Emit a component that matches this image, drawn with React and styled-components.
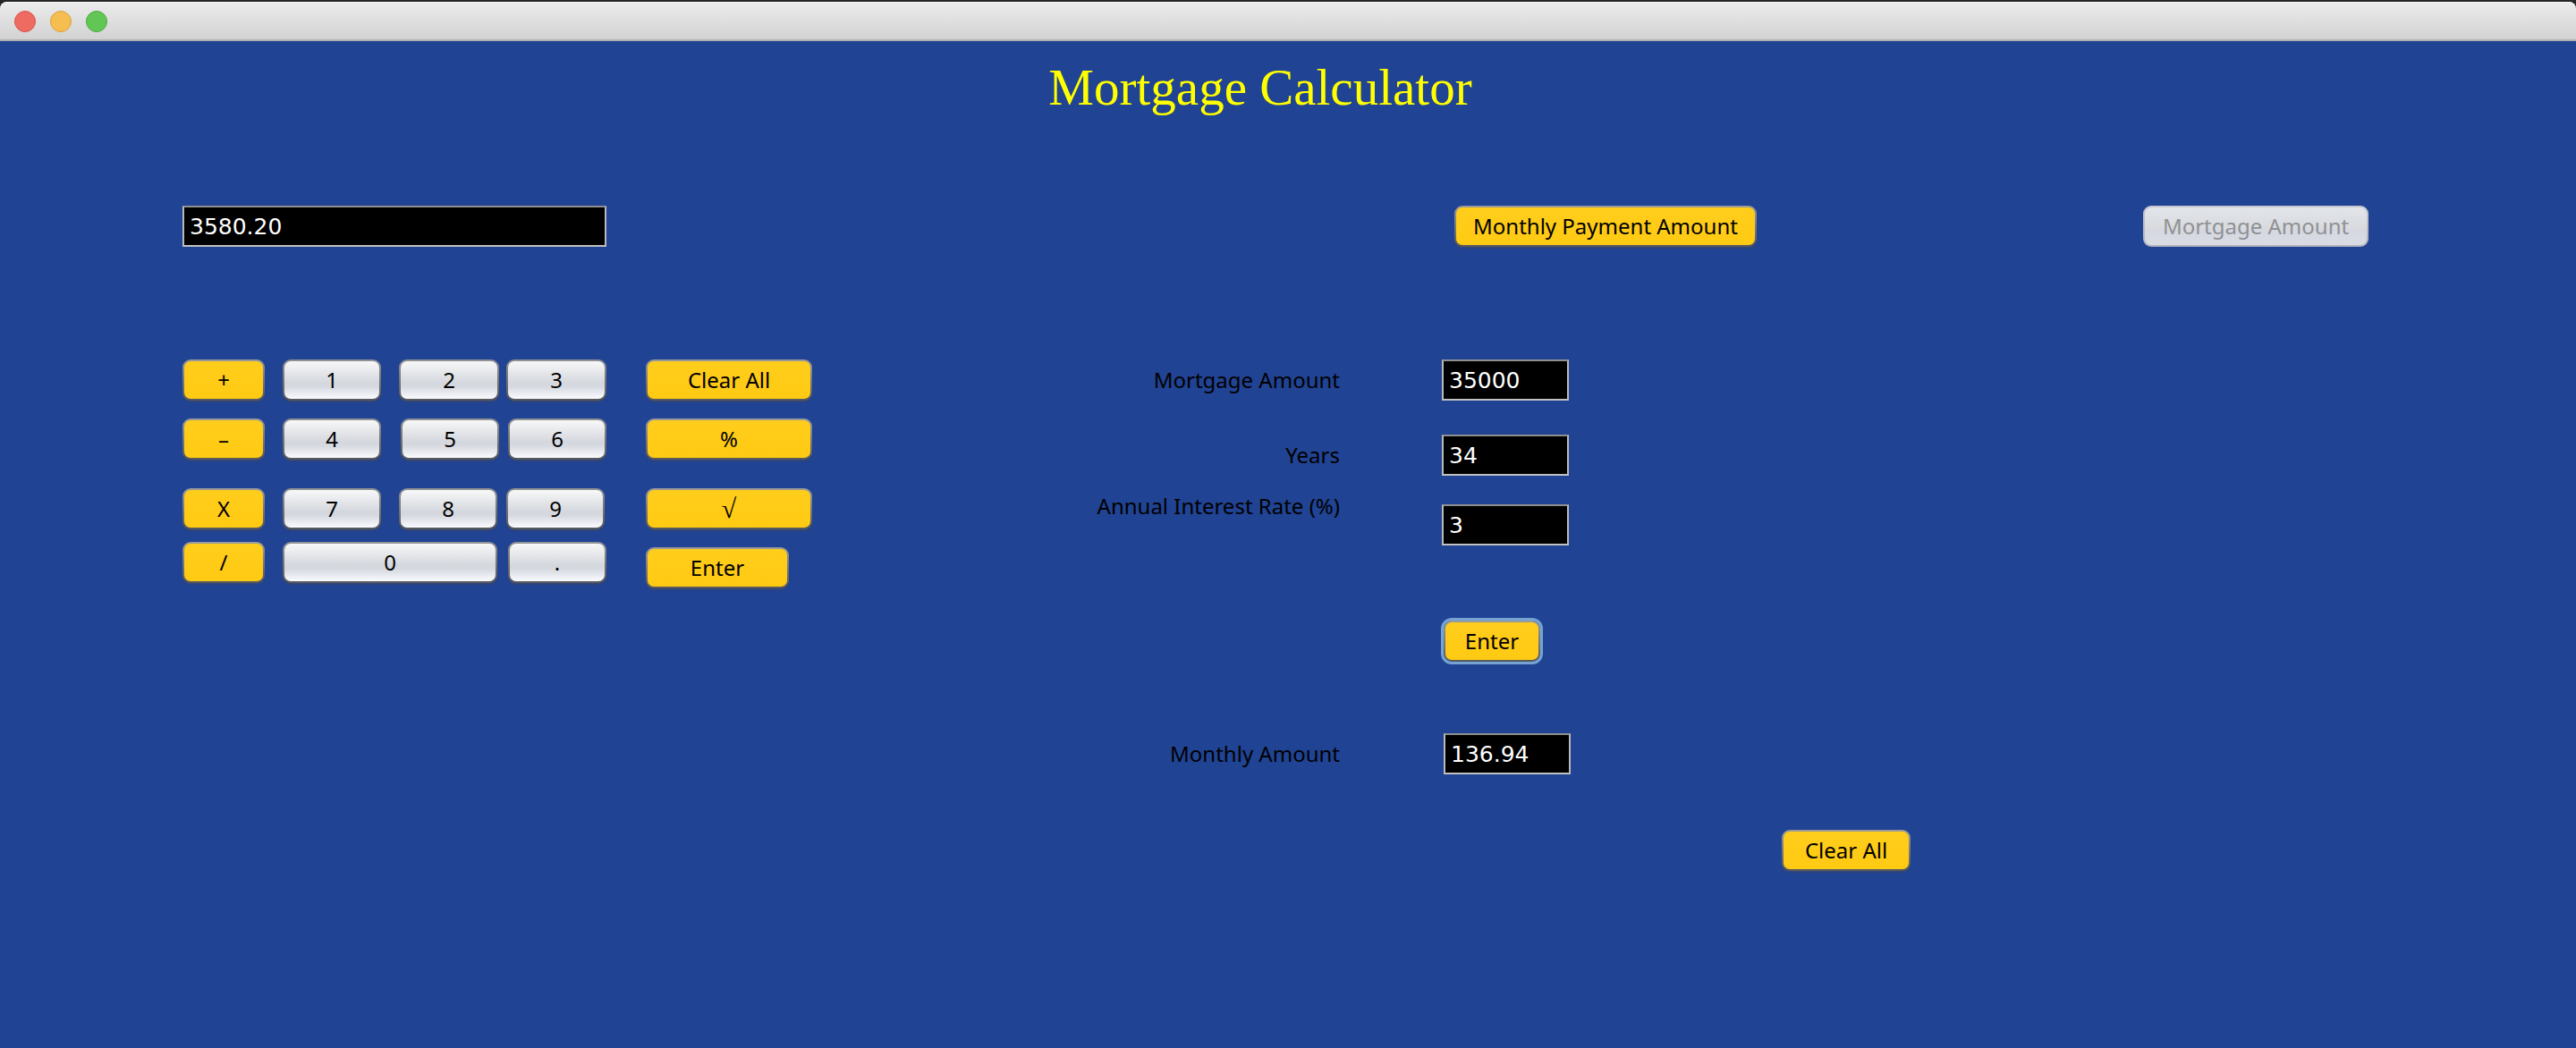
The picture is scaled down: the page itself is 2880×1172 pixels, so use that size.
import React from "react";
import styled, { createGlobalStyle, css } from "styled-components";

const GlobalStyle = createGlobalStyle`
  *, *::before, *::after { box-sizing: border-box; }
  body {
    margin: 0;
    background: #204393;
    color: #000;
    font-family: "Noto Sans", "Open Sans", sans-serif;
    font-size: 24px;
    line-height: 32px;
  }
`;

const Window = styled.div`
  min-height: 100vh;
  background: #204393;
`;

const TitleBarBackdrop = styled.div`
  padding-top: 2px;
  background: #262424;
`;

const TitleBar = styled.header`
  display: flex;
  align-items: center;
  gap: 16px;
  height: 44px;
  padding: 2px 16px 0;
  border-bottom: 2px solid #b1b1b1;
  border-radius: 8px 8px 0 0;
  background: linear-gradient(#ececec, #d2d2d2);
  box-shadow: inset 0 1px 0 #f7f7f7;
`;

const WindowButton = styled.button`
  width: 24px;
  height: 24px;
  padding: 0;
  border: 1px solid ${(p) => p.$edge};
  border-radius: 50%;
  background: ${(p) => p.$fill};
`;

const Title = styled.h1`
  margin: 0;
  padding: 20px 62px 0 0;
  color: #ffff00;
  font-family: "Liberation Serif", serif;
  font-size: 57px;
  font-weight: 400;
  line-height: 64px;
  text-align: center;
`;

const Content = styled.main`
  display: grid;
  grid-template-columns: 704px 1fr;
  align-items: start;
  padding: 100px 232px 60px 204px;
`;

const Calculator = styled.section`
  display: grid;
  row-gap: 126px;
`;

const Field = styled.input`
  display: block;
  width: ${(p) => p.$width}px;
  height: 46px;
  padding: 0 6px;
  border: 2px solid;
  border-color: #8f8f8f #b9b9b9 #c1c1c1;
  border-radius: 0;
  outline: none;
  background: #000;
  color: #fff;
  font-family: "DejaVu Sans", sans-serif;
  font-size: 25px;
`;

const tones = {
  gold: css`
    color: #000;
    background:
      linear-gradient(#ffcd1c, #ffca12) padding-box,
      linear-gradient(#9b9b9b, #56585c) border-box;
    box-shadow: 0 2px 1px rgba(70, 74, 92, 0.5);
  `,
  silver: css`
    color: #000;
    background:
      linear-gradient(#f7f8f8, #d4d7dd 58%, #d6d9e0 68%, #fafbff) padding-box,
      linear-gradient(#929395, #56585c) border-box;
    box-shadow: 0 2px 1px rgba(70, 74, 92, 0.5);
  `,
  disabled: css`
    color: #8f9193;
    background:
      linear-gradient(#e2e5ea, #d8dade 55%, #d6d8e1 60%, #dadce5) padding-box,
      linear-gradient(#c6c8d0, #b3b5be) border-box;
  `,
};

const PushButton = styled.button`
  width: ${(p) => (p.$width ? `${p.$width}px` : "100%")};
  height: 46px;
  padding: 0;
  border: 2px solid transparent;
  border-radius: 9px;
  font: inherit;
  text-align: center;
  white-space: nowrap;
  ${(p) => tones[p.$tone || "gold"]}
  ${(p) =>
    p.$symbol &&
    css`
      font-family: "Liberation Serif", serif;
      font-size: 30px;
    `}
  ${(p) =>
    p.$focused &&
    css`
      outline: 3px solid #74a3d4;
    `}
`;

const Keypad = styled.div`
  display: flex;
  justify-content: space-between;
  align-items: flex-start;
`;

const KeyStack = styled.div`
  display: grid;
  row-gap: 20px;
  width: ${(p) => p.$width}px;
`;

const KeyGroup = styled.div`
  display: grid;
  row-gap: 14px;
  margin-bottom: ${(p) => (p.$spaced ? 12 : 0)}px;
`;

const KeyRow = styled.div`
  display: flex;
  justify-content: space-between;
`;

const DigitPair = styled.div`
  display: flex;
  gap: ${(p) => p.$gap}px;
`;

const Digits = styled.div`
  display: flex;
  justify-content: ${(p) => (p.$start ? "flex-start" : "space-between")};
  column-gap: ${(p) => (p.$start ? 20 : 0)}px;
  width: 362px;
`;

const Mortgage = styled.section`
  display: grid;
  grid-template-columns: 295fr 518fr;
  column-gap: 114px;
`;

const ModeBar = styled.div`
  grid-column: 2;
  display: flex;
  justify-content: space-between;
  padding-left: 14px;
  margin-bottom: 126px;
`;

const FieldLabel = styled.label`
  align-self: ${(p) => (p.$raised ? "start" : "center")};
  text-align: right;
  white-space: nowrap;
  margin-top: ${(p) => p.$space || 0}px;
`;

const FieldCell = styled.div`
  grid-column: 2;
  margin-top: ${(p) => p.$space || 0}px;
  padding-left: ${(p) => p.$inset || 0}px;
`;

const silver = { type: "button", $tone: "silver" };

export default function App() {
  return (
    <Window>
      <GlobalStyle />
      <TitleBarBackdrop>
        <TitleBar>
          <WindowButton type="button" aria-label="Close" $fill="#ed6b60" $edge="#d8544b" />
          <WindowButton type="button" aria-label="Minimize" $fill="#f6be50" $edge="#dba03c" />
          <WindowButton type="button" aria-label="Zoom" $fill="#62c655" $edge="#4ba93f" />
        </TitleBar>
      </TitleBarBackdrop>

      <Title>Mortgage Calculator</Title>

      <Content>
        <Calculator>
          <Field $width={474} aria-label="Calculator display" defaultValue="3580.20" />
          <Keypad>
            <KeyStack $width={474}>
              <KeyRow>
                <PushButton type="button" $width={92}>+</PushButton>
                <Digits>
                  <PushButton {...silver} $width={110}>1</PushButton>
                  <DigitPair $gap={8}>
                    <PushButton {...silver} $width={112}>2</PushButton>
                    <PushButton {...silver} $width={112}>3</PushButton>
                  </DigitPair>
                </Digits>
              </KeyRow>
              <KeyGroup $spaced>
                <KeyRow>
                  <PushButton type="button" $width={92}>–</PushButton>
                  <Digits>
                    <PushButton {...silver} $width={110}>4</PushButton>
                    <DigitPair $gap={10}>
                      <PushButton {...silver} $width={110}>5</PushButton>
                      <PushButton {...silver} $width={110}>6</PushButton>
                    </DigitPair>
                  </Digits>
                </KeyRow>
              </KeyGroup>
              <KeyGroup>
                <KeyRow>
                  <PushButton type="button" $width={92}>X</PushButton>
                  <Digits $start>
                    <PushButton {...silver} $width={110}>7</PushButton>
                    <DigitPair $gap={10}>
                      <PushButton {...silver} $width={110}>8</PushButton>
                      <PushButton {...silver} $width={110}>9</PushButton>
                    </DigitPair>
                  </Digits>
                </KeyRow>
                <KeyRow>
                  <PushButton type="button" $width={92}>/</PushButton>
                  <Digits>
                    <PushButton {...silver} $width={240}>0</PushButton>
                    <PushButton {...silver} $width={110}>.</PushButton>
                  </Digits>
                </KeyRow>
              </KeyGroup>
            </KeyStack>
            <KeyStack $width={186}>
              <PushButton type="button">Clear All</PushButton>
              <KeyGroup $spaced>
                <PushButton type="button">%</PushButton>
              </KeyGroup>
              <PushButton type="button" $symbol>√</PushButton>
              <PushButton type="button" $width={160}>Enter</PushButton>
            </KeyStack>
          </Keypad>
        </Calculator>

        <Mortgage>
          <ModeBar>
            <PushButton type="button" $width={338}>Monthly Payment Amount</PushButton>
            <PushButton type="button" $width={252} $tone="disabled" disabled>
              Mortgage Amount
            </PushButton>
          </ModeBar>

          <FieldLabel htmlFor="principal">Mortgage Amount</FieldLabel>
          <FieldCell>
            <Field id="principal" $width={142} defaultValue="35000" />
          </FieldCell>

          <FieldLabel htmlFor="years" $space={38}>Years</FieldLabel>
          <FieldCell $space={38}>
            <Field id="years" $width={142} defaultValue="34" />
          </FieldCell>

          <FieldLabel htmlFor="rate" $raised $space={18}>Annual Interest Rate (%)</FieldLabel>
          <FieldCell $space={32}>
            <Field id="rate" $width={142} defaultValue="3" />
          </FieldCell>

          <FieldCell $space={84} $inset={2}>
            <PushButton type="button" $width={108} $focused>Enter</PushButton>
          </FieldCell>

          <FieldLabel htmlFor="monthly" $space={80}>Monthly Amount</FieldLabel>
          <FieldCell $space={80} $inset={2}>
            <Field id="monthly" $width={142} defaultValue="136.94" />
          </FieldCell>

          <FieldCell $space={62} $inset={380}>
            <PushButton type="button" $width={144}>Clear All</PushButton>
          </FieldCell>
        </Mortgage>
      </Content>
    </Window>
  );
}
